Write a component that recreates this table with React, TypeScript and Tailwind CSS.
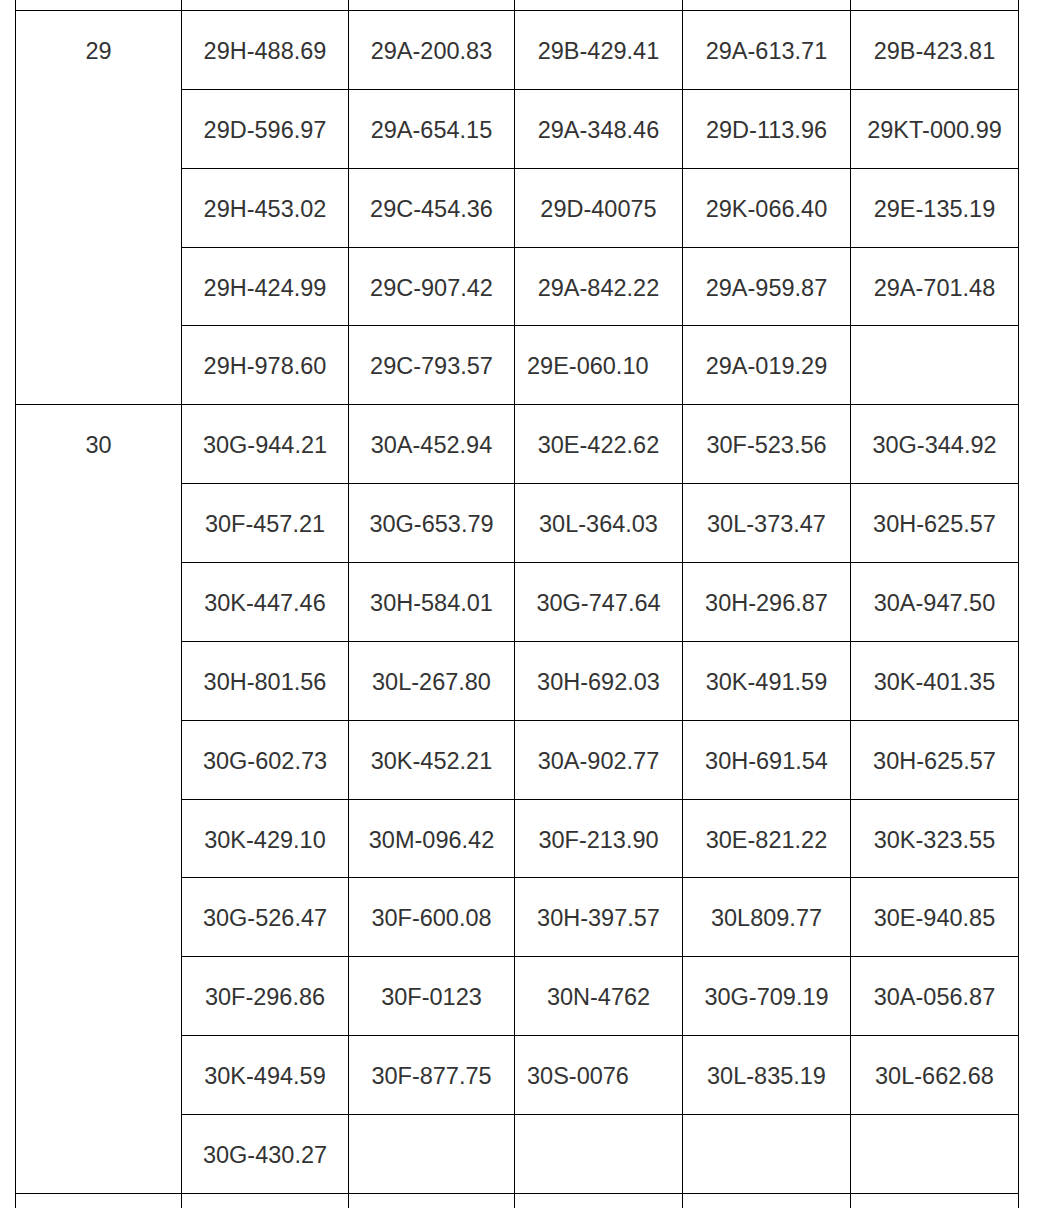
type Cell = { text: string; left?: boolean };

const group29: Cell[][] = [
  [{ text: '29H-488.69' }, { text: '29A-200.83' }, { text: '29B-429.41' }, { text: '29A-613.71' }, { text: '29B-423.81' }],
  [{ text: '29D-596.97' }, { text: '29A-654.15' }, { text: '29A-348.46' }, { text: '29D-113.96' }, { text: '29KT-000.99' }],
  [{ text: '29H-453.02' }, { text: '29C-454.36' }, { text: '29D-40075' }, { text: '29K-066.40' }, { text: '29E-135.19' }],
  [{ text: '29H-424.99' }, { text: '29C-907.42' }, { text: '29A-842.22' }, { text: '29A-959.87' }, { text: '29A-701.48' }],
  [{ text: '29H-978.60' }, { text: '29C-793.57' }, { text: '29E-060.10', left: true }, { text: '29A-019.29' }, { text: '' }],
];

const group30: Cell[][] = [
  [{ text: '30G-944.21' }, { text: '30A-452.94' }, { text: '30E-422.62' }, { text: '30F-523.56' }, { text: '30G-344.92' }],
  [{ text: '30F-457.21' }, { text: '30G-653.79' }, { text: '30L-364.03' }, { text: '30L-373.47' }, { text: '30H-625.57' }],
  [{ text: '30K-447.46' }, { text: '30H-584.01' }, { text: '30G-747.64' }, { text: '30H-296.87' }, { text: '30A-947.50' }],
  [{ text: '30H-801.56' }, { text: '30L-267.80' }, { text: '30H-692.03' }, { text: '30K-491.59' }, { text: '30K-401.35' }],
  [{ text: '30G-602.73' }, { text: '30K-452.21' }, { text: '30A-902.77' }, { text: '30H-691.54' }, { text: '30H-625.57' }],
  [{ text: '30K-429.10' }, { text: '30M-096.42' }, { text: '30F-213.90' }, { text: '30E-821.22' }, { text: '30K-323.55' }],
  [{ text: '30G-526.47' }, { text: '30F-600.08' }, { text: '30H-397.57' }, { text: '30L809.77' }, { text: '30E-940.85' }],
  [{ text: '30F-296.86' }, { text: '30F-0123' }, { text: '30N-4762' }, { text: '30G-709.19' }, { text: '30A-056.87' }],
  [{ text: '30K-494.59' }, { text: '30F-877.75' }, { text: '30S-0076', left: true }, { text: '30L-835.19' }, { text: '30L-662.68' }],
  [{ text: '30G-430.27' }, { text: '' }, { text: '' }, { text: '' }, { text: '' }],
];

const cellCls = 'border border-black align-top pt-[23px] px-3 leading-[34px] whitespace-nowrap';

function Group({ label, rows }: { label: string; rows: Cell[][] }) {
  return (
    <>
      {rows.map((row, i) => (
        <tr key={i} className="h-[78.87px]">
          {i === 0 && (
            <td rowSpan={rows.length} className={`${cellCls} text-center`}>
              {label}
            </td>
          )}
          {row.map((c, j) => (
            <td key={j} className={`${cellCls} ${c.left ? 'text-left' : 'text-center'}`}>
              {c.text}
            </td>
          ))}
        </tr>
      ))}
    </>
  );
}

export default function App() {
  const widths = [166, 167, 166, 168, 168, 168];
  return (
    <div className="h-[1208px] w-[1040px] overflow-hidden bg-white pl-[15px]">
      <table
        className="table-fixed border-collapse text-[23.5px] text-[#333]"
        style={{ fontFamily: '"Liberation Sans", Arial, sans-serif' }}
      >
        <colgroup>
          {widths.map((w, i) => (
            <col key={i} style={{ width: w }} />
          ))}
        </colgroup>
        <tbody>
          <tr className="h-[10.5px]">
            {widths.map((_, i) => (
              <td key={i} className="border-x border-b border-black p-0" />
            ))}
          </tr>
          <Group label="29" rows={group29} />
          <Group label="30" rows={group30} />
          <tr className="h-[40px]">
            {widths.map((_, i) => (
              <td key={i} className="border-x border-t border-black p-0" />
            ))}
          </tr>
        </tbody>
      </table>
    </div>
  );
}
